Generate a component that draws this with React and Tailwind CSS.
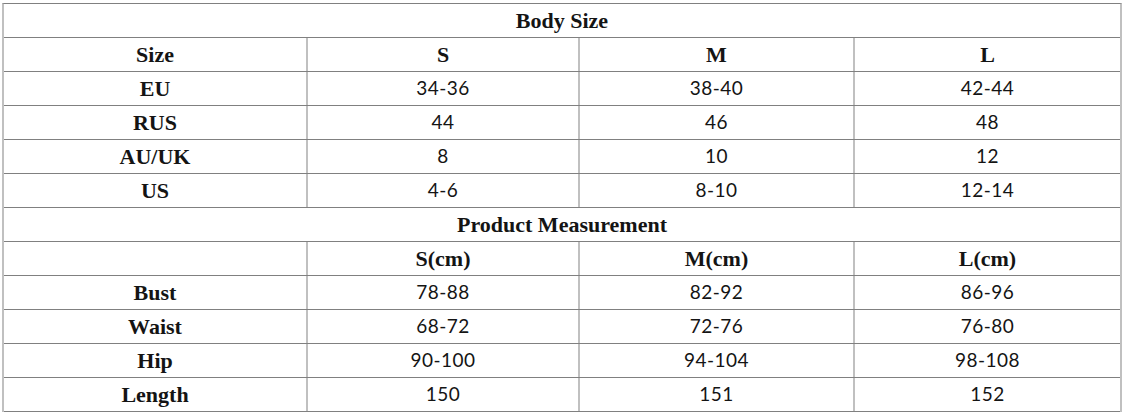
const bodyRows = [
  ["EU", "34-36", "38-40", "42-44"],
  ["RUS", "44", "46", "48"],
  ["AU/UK", "8", "10", "12"],
  ["US", "4-6", "8-10", "12-14"],
];

const measureRows = [
  ["Bust", "78-88", "82-92", "86-96"],
  ["Waist", "68-72", "72-76", "76-80"],
  ["Hip", "90-100", "94-104", "98-108"],
  ["Length", "150", "151", "152"],
];

const serif = "font-['Liberation_Serif','Times_New_Roman',serif] font-bold text-[22px]";
const sans = "font-['Lato','Open_Sans',sans-serif] text-[19px] tracking-[0.5px]";

function TitleRow({ title }) {
  return (
    <div className={`h-[34px] border-b border-[#808080] flex items-center justify-center text-[#141414] ${serif}`}>
      {title}
    </div>
  );
}

function Row({ cells, head }) {
  const widths = ["w-[302px]", "w-[272px]", "w-[275px]", "w-[267px]"];
  return (
    <div className="h-[34px] border-b border-[#808080] flex">
      {cells.map((c, i) => (
        <div
          key={i}
          className={`${widths[i]} h-full flex items-center justify-center text-[#141414] ${
            i > 0 ? "border-l-2 border-[#c0c0c0]" : ""
          } ${i === 0 || head ? serif : sans}`}
        >
          {c}
        </div>
      ))}
    </div>
  );
}

export default function App() {
  return (
    <div className="w-[1125px] h-[413px] bg-white pt-[3px] pl-[2px]">
      <div className="w-[1120px] border-t border-[#808080] border-l-2 border-r-2 border-l-[#c0c0c0] border-r-[#c0c0c0]">
        <TitleRow title="Body Size" />
        <Row cells={["Size", "S", "M", "L"]} head />
        {bodyRows.map((r) => (
          <Row key={r[0]} cells={r} />
        ))}
        <TitleRow title="Product Measurement" />
        <Row cells={["", "S(cm)", "M(cm)", "L(cm)"]} head />
        {measureRows.map((r) => (
          <Row key={r[0]} cells={r} />
        ))}
      </div>
    </div>
  );
}
